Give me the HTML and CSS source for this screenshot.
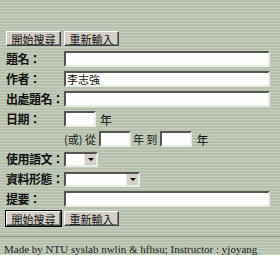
FILE: index.html
```html
<!DOCTYPE html>
<html lang="zh-Hant">
<head>
    <meta charset="UTF-8">
    <title>查詢</title>
    <link rel="stylesheet" href="styles.css">
</head>
<body>
    <form class="search-form">
        <div class="row buttons">
            <span class="btn">開始搜尋</span>
            <span class="btn">重新輸入</span>
        </div>
        <div class="row">
            <label class="label">題名：</label>
            <span class="field wide"></span>
        </div>
        <div class="row">
            <label class="label">作者：</label>
            <span class="field wide">李志強</span>
        </div>
        <div class="row">
            <label class="label">出處題名：</label>
            <span class="field wide"></span>
        </div>
        <div class="row">
            <label class="label">日期：</label>
            <span class="field year"></span>
            <span class="unit">年</span>
        </div>
        <div class="row">
            <span class="label"></span>
            <span class="text">(或) 從</span>
            <span class="field year"></span>
            <span class="text">年 到</span>
            <span class="field year"></span>
            <span class="unit">年</span>
        </div>
        <div class="row">
            <label class="label">使用語文：</label>
            <span class="select lang"><span class="box"></span><span class="arrow"></span></span>
        </div>
        <div class="row">
            <label class="label">資料形態：</label>
            <span class="select type"><span class="box"></span><span class="arrow"></span></span>
        </div>
        <div class="row">
            <label class="label">提要：</label>
            <span class="field wide"></span>
        </div>
        <div class="row buttons">
            <span class="btn default">開始搜尋</span>
            <span class="btn">重新輸入</span>
        </div>
    </form>
    <hr class="rule">
    <p class="footer">Made by NTU syslab nwlin &amp; hfhsu; Instructor : yjoyang</p>
</body>
</html>
```

FILE: styles.css
```css
body {
    margin: 0;
    height: 255px;
    overflow: hidden;
    background-color: #b9c2b1;
    background-image: repeating-linear-gradient(
        to bottom,
        #b6c0ad 0px,
        #b6c0ad 2px,
        #c6cfbf 2px,
        #c6cfbf 3px
    );
    font-family: "Noto Sans CJK TC", "Liberation Sans", sans-serif;
    color: #111;
}

.search-form {
    display: flex;
    flex-direction: column;
    gap: 4px;
    padding: 31px 0 0 6px;
}

.row {
    display: flex;
    align-items: center;
    height: 16px;
}

.buttons {
    gap: 3px;
    align-items: flex-start;
}

.label {
    width: 58px;
    flex: none;
    font-size: 12px;
    font-weight: bold;
    line-height: 16px;
    letter-spacing: -0.5px;
    white-space: nowrap;
}

.btn {
    display: flex;
    align-items: center;
    justify-content: center;
    width: 55px;
    height: 15px;
    box-sizing: border-box;
    font-size: 11px;
    background: #d4d0c8;
    border: 1px solid;
    border-color: #ffffff #404040 #404040 #ffffff;
    box-shadow: inset -1px -1px 0 #808080;
}

.btn.default {
    outline: 1px solid #000;
}

.field {
    display: block;
    height: 16px;
    box-sizing: border-box;
    background: #fdfdfb;
    border: 2px solid;
    border-color: #555 #e8ece4 #e8ece4 #555;
    font-size: 11px;
    line-height: 12px;
    padding-left: 1px;
}

.wide {
    width: 206px;
}

.year {
    width: 32px;
}

.unit {
    font-size: 12px;
    margin-left: 4px;
}

.text {
    font-size: 11px;
    margin: 0 3px 0 0;
    white-space: nowrap;
}

.field + .text {
    margin-left: 2px;
}

.select {
    display: flex;
    height: 15px;
    box-sizing: border-box;
    border: 2px solid;
    border-color: #555 #e8ece4 #e8ece4 #555;
    background: #fdfdfb;
}

.select .box {
    flex: 1;
}

.select .arrow {
    position: relative;
    width: 11px;
    background: #d4d0c8;
    border-left: 1px solid #e8e8e8;
}

.select .arrow::after {
    content: "";
    position: absolute;
    left: 3px;
    top: 4px;
    border-left: 3px solid transparent;
    border-right: 3px solid transparent;
    border-top: 3px solid #000;
}

.lang {
    width: 34px;
}

.type {
    width: 76px;
}

.rule {
    margin: 9px 0 0 0;
    border: none;
    border-top: 1px solid #8f9887;
    height: 0;
}

.footer {
    margin: 6px 0 0 4px;
    font-family: "Liberation Serif", serif;
    font-size: 11px;
    color: #222;
    white-space: nowrap;
}
```
